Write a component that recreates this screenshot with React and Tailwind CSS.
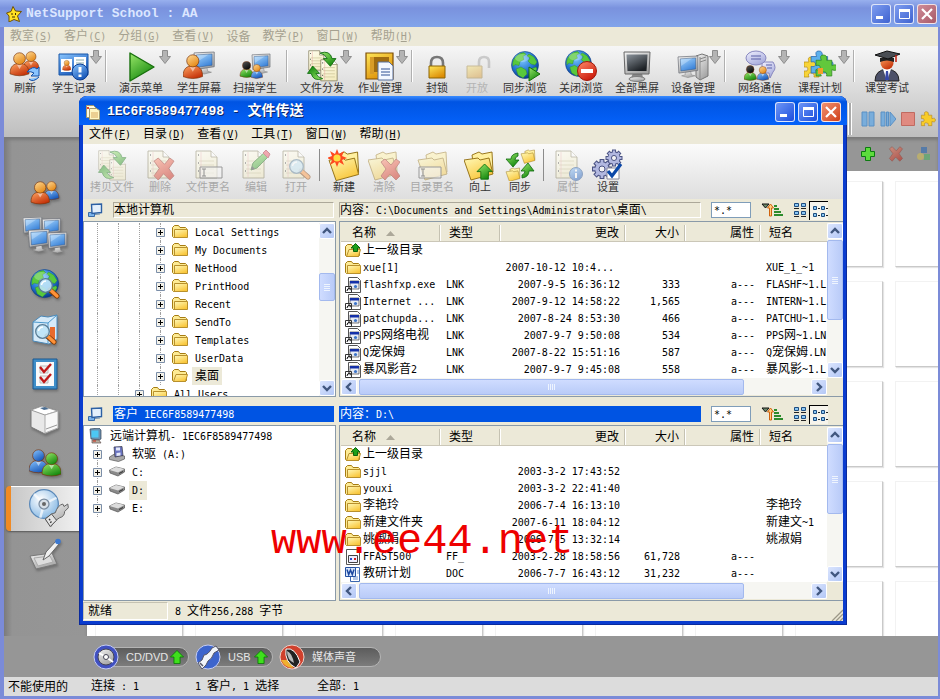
import React from "react";

/* ---------- text ---------- */

const CJK = "font-['DejaVu_Sans_Mono','Noto_Sans_CJK_SC',monospace]";

function T({ children, latin = "text-[10px]" }) {
  return (
    <span className="whitespace-pre">
      {String(children)
        .split(/([\x20-\x7e]+)/)
        .filter(Boolean)
        .map((part, i) =>
          /^[\x20-\x7e]/.test(part) ? (
            <span key={i} className={latin}>
              {part}
            </span>
          ) : (
            part
          )
        )}
    </span>
  );
}

/* ---------- shared drawing parts ---------- */

const stops = {
  orange: ["#ffa865", "#c5330a"],
  skin: ["#ffdb9a", "#e58a18"],
  blue: ["#8ac6ff", "#1656b8"],
  screen: ["#a8d8ff", "#3a82d8"],
  dark: ["#8c949c", "#1c2024"],
  green: ["#9be86a", "#178a10"],
  folder: ["#fff9b8", "#f9c63a"],
  gold: ["#ffe85a", "#dc8c04"],
  red: ["#ff8a6a", "#cc1c0c"],
  page: ["#fffef0", "#f4ecc0"],
  gray: ["#f4f4f4", "#a4a4a4"],
  lilac: ["#f0f0ff", "#a8acdc"],
  hair: ["#555", "#0a0a0a"],
};

function Defs() {
  return (
    <svg width="0" height="0" className="absolute" aria-hidden="true">
      <defs>
        {Object.entries(stops).map(([id, [a, b]]) => (
          <linearGradient key={id} id={id} x1="0" y1="0" x2="0.6" y2="1">
            <stop offset="0" stopColor={a} />
            <stop offset="1" stopColor={b} />
          </linearGradient>
        ))}
        <radialGradient id="sea" cx="0.4" cy="0.3" r="0.75">
          <stop offset="0" stopColor="#7cc8ff" />
          <stop offset="0.6" stopColor="#2272d0" />
          <stop offset="1" stopColor="#083080" />
        </radialGradient>
        <radialGradient id="disc" cx="0.4" cy="0.35" r="0.7">
          <stop offset="0" stopColor="#fff" />
          <stop offset="1" stopColor="#86b8e4" />
        </radialGradient>
      </defs>
    </svg>
  );
}

function Svg({ size = "size-8", box = 32, children }) {
  return (
    <svg className={`${size} shrink-0`} viewBox={`0 0 ${box} ${box}`} aria-hidden="true">
      {children}
    </svg>
  );
}

const at = (x, y, s = 1) => `translate(${x} ${y}) scale(${s})`;

const Person = ({ x, y, s, body = "orange", head = "skin" }) => (
  <g transform={at(x, y, s)} stroke="#7a3208" strokeWidth="0.7">
    <path d="M0 23C0 15 4 12 10 12S20 15 20 23Q10 27 0 23Z" fill={`url(#${body})`} />
    <path d="M7 13l3 5 3-5z" fill="#fff" stroke="none" opacity="0.5" />
    <circle cx="10" cy="7" r="6.2" fill={`url(#${head})`} />
  </g>
);

const Screen = ({ x, y, s, fill = "screen" }) => (
  <g transform={at(x, y, s)}>
    <path d="M8 18l6-1 1 4 4 1-8 2-7-2 4-1z" fill="url(#gray)" stroke="#777" strokeWidth="0.5" />
    <path d="M0 1L22 0v16L1 19z" fill="url(#gray)" stroke="#6c7078" strokeWidth="0.8" />
    <path d="M2.5 3.2L19.6 2.2v12.2L3.2 16.6z" fill={`url(#${fill})`} stroke="#2c5080" strokeWidth="0.5" />
    <path d="M3 3.5L16 2.6 3.4 11z" fill="#fff" opacity="0.28" />
  </g>
);

const Globe = ({ x = 2, y = 1, s = 1 }) => (
  <g transform={at(x, y, s)}>
    <circle cx="14" cy="14" r="13.5" fill="url(#sea)" stroke="#0b3c84" strokeWidth="0.6" />
    <path d="M3 8Q7 2 13 1.5l2 2-3 2 1 3-4 2-1 4-4-1-2 2Q1 11 3 8zM18 3l5 3 3 5-2 3-4-1-3-3 2-3-3-2zM5 18l5-2 5 3 1 4-4 4-5-3zM20 18l5-2 1 2-3 5-4 1z" fill="#58c83c" stroke="#2c8c20" strokeWidth="0.4" />
    <ellipse cx="11" cy="7" rx="7" ry="4" fill="#fff" opacity="0.25" />
  </g>
);

const Page = ({ x, y, s = 1 }) => (
  <g transform={at(x, y, s)}>
    <path d="M1 1h15l6 6v21H1z" fill="url(#page)" stroke="#77704c" strokeWidth="0.9" />
    <path d="M16 1v6h6" fill="#fff" stroke="#77704c" strokeWidth="0.8" />
    <path d="M4 11h15M4 15h15M4 19h15M4 23h15" stroke="#c4bc8c" strokeWidth="0.8" />
    <path d="M6 2v25" stroke="#e8a0a0" strokeWidth="0.6" />
    <path d="M3 5h1M3 13h1M3 21h1" stroke="#333" strokeWidth="1.4" />
  </g>
);

const Folder = ({ x, y, s = 1 }) => (
  <g transform={at(x, y, s)} stroke="#8e6a0c" strokeWidth="0.9" strokeLinejoin="round">
    <path d="M8 5l7-3 3 2 10-2 1 20-18 5z" fill="#fff0a0" />
    <path d="M0 10l14-2 2 2 9-2 4 16-22 6z" fill="url(#folder)" />
  </g>
);

const Lens = ({ x, y, s = 1 }) => (
  <g transform={at(x, y, s)}>
    <path d="M12 12l7 6" stroke="#7c3a08" strokeWidth="5" strokeLinecap="round" />
    <path d="M12.5 12l6.5 6" stroke="#ff9238" strokeWidth="3.4" strokeLinecap="round" />
    <circle cx="7.5" cy="7.5" r="6.8" fill="#bfe4f6" fillOpacity="0.9" stroke="#5a7c94" strokeWidth="1.3" />
    <path d="M3.5 7Q4 3.5 8 3" fill="none" stroke="#fff" strokeWidth="1.5" />
  </g>
);

const UpArrow = ({ x, y, s = 1 }) => (
  <path transform={at(x, y, s)} d="M8 0l8 8h-4v8H4V8H0z" fill="url(#green)" stroke="#0c6a0c" strokeWidth="0.9" />
);

const Cross = ({ x, y, s = 1 }) => (
  <path transform={at(x, y, s)} d="M1 3l4-3 6 6 5-6 4 3-5 7 5 7-4 4-6-6-5 6-4-4 5-7z" fill="url(#red)" stroke="#8c1408" strokeWidth="0.8" />
);

const Curl = ({ x, y, s = 1, r = 0 }) => (
  <path transform={`translate(${x} ${y}) scale(${s}) rotate(${r} 7 7)`} d="M0 1Q9-2 11 6h3.500L9.500 13 3 6h3.500Q5 2 0 1z" fill="url(#green)" stroke="#0c6a0c" strokeWidth="0.8" />
);

const Cursor = ({ x, y }) => (
  <g transform={at(x, y)}>
    <path d="M0 0h22v11H0z" fill="#fff" fillOpacity="0.6" stroke="#333" />
    <path d="M2 2h4M4 2v7M2 9h4" stroke="#222" fill="none" />
  </g>
);

const Puzzle = ({ x, y, s = 1, fill, stroke = "#3a6a20" }) => (
  <path transform={at(x, y, s)} d="M1 5h5Q4 0 8 0t3 5h5v5q5-2 5 2t-5 2v6h-5q1-4-3-4t-2 4H1v-6q4 1 4-2T1 10z" fill={fill} stroke={stroke} strokeWidth="0.7" />
);

const Gear = ({ x, y, r }) => (
  <g transform={at(x, y)} fill="none">
    {[0, 45, 90, 135].map((a) => (
      <path key={a} transform={`rotate(${a})`} d={`M0 ${-r}V${r}`} stroke="#4c5484" strokeWidth={r * 0.48} />
    ))}
    <circle r={r * 0.78} fill="#4c5484" />
    {[0, 45, 90, 135].map((a) => (
      <path key={a} transform={`rotate(${a})`} d={`M0 ${1 - r}V${r - 1}`} stroke="#b2b8e0" strokeWidth={r * 0.26} />
    ))}
    <circle r={r * 0.68} fill="#b2b8e0" />
    <circle r={r * 0.3} fill="#f4f4f4" stroke="#4c5484" />
  </g>
);

/* ---------- large icons ---------- */

const art = {
  refresh: (
    <>
      <Person x={14} y={1} s={0.8} />
      <Person x={1} y={2} s={0.95} />
      <path d="M18 22q6-7 10-3l2-2v9h-8l3-3q-3-2-7-1zM30 27q-6 6-10 2" fill="#8ac4ff" stroke="#1450a8" strokeWidth="1" />
    </>
  ),
  record: (
    <>
      <path d="M1 4h29v21H1z" fill="url(#blue)" stroke="#1856a8" />
      <path d="M3 9h11v13H3zM16 7h12v13H16z" fill="#fff" />
      <Person x={4.5} y={10} s={0.42} />
      <path d="M18 10h8M18 13h8M18 16h6" stroke="#8aa" />
      <circle cx="22" cy="22" r="8" fill="url(#blue)" stroke="#0c3c90" />
      <path d="M22 17v5.5M22 24.5v2.6" stroke="#fff" strokeWidth="3" />
    </>
  ),
  play: <path d="M5 3L29 17 5 31z" fill="url(#green)" stroke="#17700c" strokeWidth="1.4" strokeLinejoin="round" />,
  studentScreen: (
    <>
      <Screen x={11} y={2} s={0.92} />
      <Person x={0} y={4} s={0.98} />
    </>
  ),
  scan: (
    <>
      <Screen x={13} y={4} s={0.82} />
      <Person x={1} y={11} s={0.66} body="green" head="hair" />
      <Person x={12} y={14} s={0.58} body="blue" />
    </>
  ),
  distribute: (
    <>
      <Page x={2} y={0} s={0.72} />
      <Page x={14} y={9} s={0.78} />
      <Curl x={14} y={2} s={1.1} />
      <Curl x={2} y={15} s={1.05} r={180} />
    </>
  ),
  homework: (
    <>
      <path d="M2 3h27v26H2z" fill="url(#gold)" stroke="#7c4c04" strokeWidth="1.2" />
      <path d="M6 7h19v15H6z" fill="#a06c10" />
      <path d="M6 7h4v17H6z" fill="#d89c28" />
      <path d="M14 12h11l4 4v14H14z" fill="#f4f8ff" stroke="#58709c" />
      <path d="M17 19h9M17 22h9M17 25h9" stroke="#7088b8" strokeWidth="1.5" />
    </>
  ),
  lock: (
    <>
      <path d="M10 17v-4q0-6 6-6t6 6v4" fill="none" stroke="#777" strokeWidth="2.600" />
      <path d="M8 16h16v12H8z" fill="url(#gold)" stroke="#8c6404" strokeLinejoin="round" />
    </>
  ),
  unlock: (
    <>
      <path d="M18 16v-4q0-5 5-5t5 5v6" fill="none" stroke="#888" strokeWidth="2.6" />
      <path d="M6 16h15v12H6z" fill="url(#gold)" stroke="#8c6404" />
    </>
  ),
  globePlay: (
    <>
      <Globe />
      <path d="M20 17l11 7-11 7z" fill="url(#green)" stroke="#17700c" />
    </>
  ),
  globeStop: (
    <>
      <Globe x={0} y={0} s={0.96} />
      <circle cx="22" cy="21" r="9.5" fill="url(#red)" stroke="#a01808" />
      <path d="M16 19h12v4H16z" fill="#fff" />
    </>
  ),
  black: (
    <>
      <path d="M12 23h9l1 5H10z" fill="#888" />
      <ellipse cx="16" cy="29" rx="8" ry="2.4" fill="url(#gray)" stroke="#777" />
      <path d="M3 2h26l-1 22H4z" fill="url(#gray)" stroke="#666" />
      <path d="M5.500 4.500h21L25.500 21h-19z" fill="url(#dark)" />
    </>
  ),
  device: (
    <>
      <path d="M19 6l6-2 6 2v20l-8 4-4-3z" fill="url(#gray)" stroke="#777" />
      <path d="M23 9l6-2M23 12l6-2M23 7v22" stroke="#888" fill="none" />
      <Screen x={1} y={6} s={0.9} />
    </>
  ),
  chat: (
    <>
      <path d="M18 12h11q4 6 0 10l-3 6-1-5h-7z" fill="url(#lilac)" stroke="#8888c0" />
      <ellipse cx="12" cy="8" rx="10" ry="7" fill="url(#lilac)" stroke="#8888c0" />
      <path d="M7 6h10M7 9h10M22 15h6M23 18h5" stroke="#5a60a8" strokeWidth="1.2" />
      <Person x={0} y={15} s={0.62} body="green" head="hair" />
      <Person x={13} y={16} s={0.58} body="blue" />
    </>
  ),
  lesson: (
    <>
      <Puzzle x={-1} y={7} s={1} fill="#f8d438" stroke="#b88c10" />
      <Puzzle x={6} y={1} s={1.1} fill="#5cb0ec" stroke="#2868b0" />
      <Puzzle x={11} y={5} s={1.05} fill="#62c83c" stroke="#2c8420" />
      <path d="M14 18h5v6h-5z" fill="#f4a028" />
    </>
  ),
  exam: (
    <>
      <path d="M4 31q0-11 12-12 12 1 12 12z" fill="#4c5068" stroke="#222" />
      <path d="M12 19l4 12 4-12z" fill="#fff" />
      <path d="M15 21h2l1 9h-4z" fill="#3848a8" />
      <circle cx="16" cy="13" r="6.500" fill="url(#orange)" />
      <path d="M9 8h14v4q-7-3-14 0z" fill="#222" />
      <path d="M4 5l12-4 13 3-12 5z" fill="#4a4e54" stroke="#111" />
      <path d="M25 5v7" stroke="#c01c0c" strokeWidth="1.500" />
    </>
  ),
  copy: (
    <>
      <Page x={2} y={1} s={0.7} />
      <Page x={13} y={10} s={0.75} />
      <Curl x={14} y={2} s={1.1} />
      <Curl x={3} y={15} s={1.05} r={180} />
    </>
  ),
  deletePage: (
    <>
      <Page x={3} y={1} />
      <Cross x={9} y={9} s={1.05} />
    </>
  ),
  rename: (
    <>
      <Page x={3} y={1} />
      <Cursor x={8} y={18} />
    </>
  ),
  edit: (
    <>
      <Page x={2} y={1} />
      <path d="M11 21l2-7L25 3l4 4-12 12z" fill="url(#green)" stroke="#186810" />
      <path d="M23 4l3-3 4 4-2 4z" fill="#e84a5a" stroke="#a02030" />
      <path d="M11 21l1-4 3 3z" fill="#333" />
    </>
  ),
  open: (
    <>
      <Page x={2} y={1} />
      <Lens x={9} y={10} />
    </>
  ),
  newFolder: (
    <>
      <Folder x={1} y={1} s={1.02} />
      <path d="M9 0l2 5 5-3-2 5 5 2-5 2 2 5-5-3-2 5-2-5-5 3 2-5-5-2 5-2-2-5 5 3z" fill="#ff4a20" />
      <circle cx="9" cy="9" r="3.600" fill="#ffdc40" />
    </>
  ),
  clear: (
    <>
      <Folder x={0} y={1} />
      <Cross x={12} y={10} />
    </>
  ),
  renameDir: (
    <>
      <Folder x={2} y={1} />
      <Cursor x={3} y={18} />
    </>
  ),
  up: (
    <>
      <Folder x={0} y={1} />
      <UpArrow x={13} y={15} s={0.95} />
    </>
  ),
  sync: (
    <>
      <Folder x={17} y={0} s={0.48} />
      <Folder x={2} y={18} s={0.48} />
      <path d="M14 4Q7 5 7 10H2l7 8 6-7h-4q0-3 3-4z" fill="url(#green)" stroke="#0c6a0c" strokeWidth="0.8" />
      <path d="M18 29q7-1 7-7h5l-6-8-7 8h4q0 3-3 4z" fill="url(#green)" stroke="#0c6a0c" strokeWidth="0.8" />
    </>
  ),
  props: (
    <>
      <Page x={3} y={1} />
      <circle cx="24" cy="25" r="6.500" fill="url(#blue)" stroke="#1c4c90" />
      <path d="M24 20.500v2M24 24v5" stroke="#fff" strokeWidth="2" />
    </>
  ),
  settings: (
    <>
      <Gear x={22} y={9} r={8.5} />
      <Gear x={10} y={20} r={10} />
      <path d="M15 19h12v11H15z" fill="#fff" stroke="#889" />
      <path d="M16 22l4 5 9-12" fill="none" stroke="#0c48a8" strokeWidth="3.200" />
    </>
  ),
  users: (
    <>
      <Person x={15} y={3} s={0.75} body="blue" />
      <Person x={2} y={3} s={0.92} />
    </>
  ),
  monitors: (
    <>
      <Screen x={0} y={0} s={0.62} />
      <Screen x={14} y={1} s={0.6} />
      <Screen x={4} y={9} s={0.68} />
      <Screen x={18} y={11} s={0.63} />
    </>
  ),
  globeSearch: (
    <>
      <Globe x={1} y={1} s={1.04} />
      <Lens x={9} y={10} />
    </>
  ),
  boxSearch: (
    <>
      <path d="M4 9l8-6 7 1 9-2v24l-8 5-16-3z" fill="#d6eaf8" stroke="#4a88b8" />
      <path d="M4 9l15 1 9-8M19 10v20" fill="none" stroke="#4a98cc" />
      <path d="M21 14h5v12h-5z" fill="#e86a2c" />
      <Lens x={6} y={11} />
    </>
  ),
  checks: (
    <>
      <path d="M4 1h24v30H4z" fill="#3f8ec8" stroke="#1c5890" />
      <path d="M7 4h18v24H7z" fill="#fafafa" />
      <path d="M11 8h8v7h-8zM11 18h8v7h-8z" fill="#eee" stroke="#bbb" />
      <path d="M11 9l4 5 7-8M11 19l4 5 7-8" fill="none" stroke="#c01818" strokeWidth="2.400" />
    </>
  ),
  printer: (
    <>
      <path d="M2 7l11-4 16 5v17l-13 6L2 24z" fill="#e8e8e8" stroke="#777" />
      <path d="M2 7l14 5 13-4-16-5z" fill="#fff" stroke="#999" />
      <path d="M16 12v18l13-5V8z" fill="#f8f8f8" stroke="#aaa" />
      <path d="M11 5l5-1 4 2-5 1z" fill="#4a6c90" />
      <path d="M17 26l11-4" stroke="#999" />
    </>
  ),
  buddies: (
    <>
      <Person x={0} y={1} s={0.95} body="blue" head="blue" />
      <Person x={13} y={4} s={0.96} body="green" head="green" />
    </>
  ),
  discUsb: (
    <>
      <circle cx="12" cy="12" r="11.500" fill="url(#disc)" stroke="#5a88b8" />
      <path d="M12 12L4 4M12 12l-3 11M12 12l10-5" stroke="#fff" strokeWidth="2" opacity="0.7" />
      <circle cx="12" cy="12" r="4" fill="#d8e0e8" stroke="#7a8ca0" />
      <circle cx="12" cy="12" r="1.600" fill="#666" />
      <path d="M13 24l5-4 3-1q2-6 6-7l1 2 3-2 0.500 3-3 3q0 4-4 5l-3 2-4 5z" fill="url(#gray)" stroke="#666" strokeWidth="0.800" />
      <path d="M13 24l5-4 4 5-5 5z" fill="#e4e4e4" stroke="#555" strokeWidth="0.800" />
      <path d="M16 24l1 1M18 26l-1 1" stroke="#333" />
    </>
  ),
  tablet: (
    <>
      <path d="M1 18l22-3 5 11-21 5z" fill="url(#gray)" stroke="#777" />
      <path d="M5 20l16-2 3 6-15 4z" fill="#ddd" stroke="#aaa" />
      <path d="M14 22l3-8L27 3l3 3-10 12z" fill="#f0f0f0" stroke="#666" />
      <circle cx="29" cy="3.500" r="2.800" fill="#3b78d0" />
    </>
  ),
};

const Art = ({ name, size }) => <Svg size={size}>{art[name]}</Svg>;

/* ---------- small icons ---------- */

const FolderSm = ({ up, open }) => (
  <Svg size="size-4" box={16}>
    <path d="M0.500 3.500l2-2h4l1.500 2h5.500l1 1v8l-1 1H1.500l-1-1z" fill="#fdeb94" stroke="#a67c12" />
    <path d={open ? "M1.500 13.500L4 6.500h11.500l-2 7z" : "M2.500 5.500h13v8h-13z"} fill="url(#folder)" stroke="#b8902c" />
    {up && <path d="M10.500 0.500L15 5h-2.500v3.500h-4V5H6z" fill="#1da01a" stroke="#0c640c" />}
  </Svg>
);

const LinkSm = () => (
  <Svg size="size-4" box={16}>
    <path d="M3.500 0.500h9l3 3v12h-12z" fill="#fff" stroke="#555" />
    <path d="M5 4h9v8H5z" fill="#e8ecf4" stroke="#444" strokeWidth="0.700" />
    <path d="M5 4h9v2.500H5z" fill="#1430a8" />
    <circle cx="10.500" cy="9.500" r="1.600" fill="#3c74c8" />
    <path d="M0.500 9.500h6v6h-6z" fill="#fff" stroke="#333" />
    <path d="M2 14q0-2.500 2.500-2.500M3 11h2.200v2.200" fill="none" stroke="#000" />
  </Svg>
);

const FfSm = () => (
  <Svg size="size-4" box={16}>
    <path d="M1.500 0.500h10l3 3v12h-13z" fill="#fff" stroke="#555" />
    <path d="M3.500 6.500h9v7h-9z" fill="#eef" stroke="#444" />
    <path d="M5 9h2v2H5z" fill="#2848c8" />
    <path d="M9 9h2v2H9z" fill="#d02020" />
  </Svg>
);

const WordSm = () => (
  <Svg size="size-4" box={16}>
    <path d="M5.500 1.500h9v14h-9z" fill="#fff" stroke="#3c68b0" />
    <path d="M8 11h5M8 13h5M12 5h2M12 7h2" stroke="#6a90cc" />
    <path d="M0.500 1.500h10v9h-10z" fill="#d8e6fa" stroke="#2450a0" />
    <path d="M2 3.500l1.700 5L5.500 4l1.800 4.500L9 3.500" fill="none" stroke="#1c48a0" strokeWidth="1.500" />
  </Svg>
);

const smallIcons = {
  up: <FolderSm up open />,
  folder: <FolderSm />,
  link: <LinkSm />,
  ff: <FfSm />,
  word: <WordSm />,
};

const ComputersSm = () => (
  <Svg size="size-4" box={16}>
    <path d="M1.500 10.500h6v4h-6z" fill="#7cb4ec" stroke="#3a6ca8" />
    <path d="M4.500 2.500l10-0.500v8.500l-9.500 1z" fill="#e4f0fc" stroke="#2c60a4" strokeWidth="1.400" />
    <path d="M8 12.500l5-0.500" stroke="#7090b0" />
  </Svg>
);

const RootSm = () => (
  <Svg size="size-4" box={16}>
    <path d="M2 1l9-1 2 2v9l-2 1-8-1z" fill="#6a90b0" stroke="#345" strokeWidth="0.700" />
    <path d="M3.500 2.500h7v7h-7z" fill="#4cc8f4" />
    <path d="M4 12h7l2 3H4z" fill="#b8b0a0" stroke="#655" strokeWidth="0.700" />
    <path d="M5 13h3" stroke="#d02818" />
  </Svg>
);

const DriveSm = () => (
  <Svg size="size-4" box={16}>
    <path d="M0.500 6L7 3l8.500 2v3L9 12 1 9z" fill="#8a8a8a" stroke="#555" strokeWidth="0.700" />
    <path d="M0.500 6L7 3l8.500 2L9 8.500z" fill="#dcdcdc" />
    <path d="M10 9.500l4-2" stroke="#333" />
  </Svg>
);

const FloppySm = () => (
  <Svg size="size-4" box={16}>
    <path d="M0.500 11l5-3 10 2v3l-6 2.500-9-2z" fill="#aaa" stroke="#555" strokeWidth="0.700" />
    <path d="M5 1l8-0.500 1 9L6 11z" fill="#6a74c0" stroke="#334" strokeWidth="0.700" />
    <path d="M7 1.500h4v3H7zM7.500 7l4-0.500v3l-4 0.500z" fill="#e4e8f8" />
  </Svg>
);

const DocSm = () => (
  <Svg size="size-4" box={16}>
    <path d="M1.500 1.500h7l3 3v9h-10z" fill="#fffbe0" stroke="#a09870" />
    <path d="M4.500 4.500h7l3 2v9h-10z" fill="#fff6c4" stroke="#a09870" />
    <path d="M6 9h7M6 11h7M6 13h7" stroke="#d8a860" />
    <path d="M2 3h2v2H2z" fill="#e04030" />
  </Svg>
);

const Star = () => (
  <Svg size="size-4" box={16}>
    <path d="M7 0.500l2.500 4.500 6 .5-4 4.500 2 5.500-5.500-2-5 2.500V10L0.500 7l4.500-1.500z" fill="#ffe024" stroke="#705000" />
    <path d="M6 7v2M9.500 7v2M6 11h3" stroke="#402c00" />
  </Svg>
);

const DropArrow = () => (
  <svg className="absolute top-0 right-0 h-3.5 w-3" viewBox="0 0 12 14" aria-hidden="true">
    <path d="M3.500 0.500h5v6h3L6 13.500 0.500 6.500h3z" fill="#b4b4b4" stroke="#8e8e8e" />
  </svg>
);

/* ---------- window controls ---------- */

function CaptionButtons({ faded }) {
  const base = "grid size-5 place-items-center rounded-[3px] border border-white/80";
  const blue = faded
    ? "bg-linear-to-br from-[#7f9df0] to-[#3f62d0]"
    : "bg-linear-to-br from-[#6e95f6] to-[#1c4bdc]";
  const red = faded
    ? "bg-linear-to-br from-[#cf8c98] to-[#a85a68]"
    : "bg-linear-to-br from-[#f0906e] to-[#cf3b12]";
  return (
    <div className="flex shrink-0 gap-[3px]">
      <button aria-label="最小化" className={`${base} ${blue}`}>
        <svg viewBox="0 0 16 16" className="size-4"><path d="M3 10h7v3H3z" fill="#fff" /></svg>
      </button>
      <button aria-label="最大化" className={`${base} ${blue}`}>
        <svg viewBox="0 0 16 16" className="size-4"><path d="M3.500 4.500h10v8h-10z" fill="none" stroke="#fff" /><path d="M3 3h11v3H3z" fill="#fff" /></svg>
      </button>
      <button aria-label="关闭" className={`${base} ${red}`}>
        <svg viewBox="0 0 16 16" className="size-4"><path d="M3 3l10 10M13 3L3 13" stroke="#fff" strokeWidth="2.200" /></svg>
      </button>
    </div>
  );
}

function MenuBar({ items, className }) {
  return (
    <nav className={`flex h-[19px] shrink-0 items-center gap-3 bg-[#ece9d8] pl-1.5 text-xs leading-4 ${className}`}>
      {items.map(([label, key]) => (
        <button key={label} className="whitespace-nowrap">
          {label}
          {key && (
            <span className="text-[10px]">
              (<u>{key}</u>)
            </span>
          )}
        </button>
      ))}
    </nav>
  );
}

const arrowPath = {
  up: "M4 10l4-4 4 4",
  down: "M4 6l4 4 4-4",
  left: "M10 4L6 8l4 4",
  right: "M6 4l4 4-4 4",
};

function ScrollButton({ dir }) {
  return (
    <button aria-label={dir} className="size-4 shrink-0 rounded-[2px] border border-white bg-linear-to-br from-[#dbe5fe] to-[#b4c8f6]">
      <svg viewBox="1 1 14 14" className="size-full">
        <path d={arrowPath[dir]} fill="none" stroke="#41577f" strokeWidth="2.400" />
      </svg>
    </button>
  );
}

function VScroll({ before, thumb }) {
  return (
    <div className="flex w-4 shrink-0 flex-col bg-[#f6f6f2]">
      <ScrollButton dir="up" />
      <div className={`shrink-0 ${before}`} />
      <div className={`flex shrink-0 flex-col items-center justify-center gap-px rounded-[2px] border border-[#a3b9ee] bg-linear-to-r from-[#cfdcff] to-[#b9cbf8] ${thumb}`}>
        {[0, 1, 2, 3].map((n) => (
          <i key={n} className="h-px w-1.5 bg-[#eef4fe]" />
        ))}
      </div>
      <div className="flex-1" />
      <ScrollButton dir="down" />
    </div>
  );
}

function HScroll() {
  return (
    <div className="flex h-[17px] bg-[#ece9d8]">
      <div className="flex flex-1 items-center bg-[#f6f6f2]">
        <ScrollButton dir="left" />
        <div className="ml-0.5 flex h-4 w-[385px] items-center justify-center gap-px rounded-[2px] border border-[#a3b9ee] bg-linear-to-b from-[#cfdcff] to-[#b9cbf8]">
          {[0, 1, 2, 3].map((n) => (
            <i key={n} className="h-1.5 w-px bg-[#eef4fe]" />
          ))}
        </div>
        <div className="flex-1" />
        <ScrollButton dir="right" />
      </div>
      <div className="w-4" />
    </div>
  );
}

/* ---------- outer window ---------- */

const mainTools = [
  ["refresh", "刷新", "w-[42px]"],
  ["record", "学生记录", "w-14", true],
  null,
  ["play", "演示菜单", "w-15", true],
  ["studentScreen", "学生屏幕", "w-14"],
  ["scan", "扫描学生", "w-14"],
  null,
  ["distribute", "文件分发", "w-15", true],
  ["homework", "作业管理", "w-14", true],
  null,
  ["lock", "封锁", "w-10"],
  ["unlock", "开放", "w-10", false, true],
  ["globePlay", "同步浏览", "w-14"],
  ["globeStop", "关闭浏览", "w-14"],
  ["black", "全部黑屏", "w-14"],
  ["device", "设备管理", "w-14", true],
  null,
  ["chat", "网络通信", "w-15", true],
  ["lesson", "课程计划", "w-15", true],
  null,
  ["exam", "课堂考试", "w-14"],
];

function MainToolbar() {
  return (
    <div className="flex h-[91px] shrink-0 flex-col justify-between bg-linear-to-b from-[#f6f6f6] to-[#bebebe]">
      <div className="flex pt-1">
        {mainTools.map((tool, i) =>
          tool ? (
            <button
              key={i}
              disabled={tool[4]}
              className={`relative flex shrink-0 flex-col items-center text-[11px] leading-[14px] text-[#333] disabled:text-[#b4b4b4] ${tool[2]}`}
            >
              <span className={tool[4] ? "opacity-35" : ""}>
                <Art name={tool[0]} size="size-8" />
              </span>
              {tool[1]}
              {tool[3] && <DropArrow />}
            </button>
          ) : (
            <i key={i} className="mx-1 h-8 w-px shrink-0 bg-white shadow-[-1px_0_#b0b0b0]" />
          )
        )}
      </div>
      <div className="flex h-9 items-center justify-end gap-1 pr-0.5">
        <i className="mr-1 h-8 w-1 border-x border-x-white bg-[#aaa]" />
        <button aria-label="暂停">
          <Svg size="size-4" box={16}><path d="M2 1h5v14H2zM9 1h5v14H9z" fill="#79addb" stroke="#5a90c4" /></Svg>
        </button>
        <button aria-label="继续">
          <Svg size="size-4" box={16}><path d="M1 1h4v14H1zM6.500 1h2v14h-2zM10 1l6 7-6 7z" fill="#79addb" stroke="#5a90c4" /></Svg>
        </button>
        <button aria-label="停止">
          <Svg size="size-4" box={16}><path d="M1.500 1.500h13v13h-13z" fill="#e08a80" stroke="#c06a60" /></Svg>
        </button>
        <button aria-label="插件">
          <Svg size="size-4" box={24}><Puzzle x={1} y={1} s={1.05} fill="#f8cc28" stroke="#a87808" /></Svg>
        </button>
      </div>
    </div>
  );
}

const sideItems = [
  ["users", "size-8"],
  ["monitors", "size-11"],
  ["globeSearch", "size-8"],
  ["boxSearch", "size-8"],
  ["checks", "size-8"],
  ["printer", "size-8"],
  ["buddies", "size-8"],
  ["discUsb", "size-10"],
  ["tablet", "size-8"],
];

function Sidebar() {
  return (
    <aside className="w-[83px] shrink-0 bg-linear-to-r from-[#7c7c7c] via-[#949494] via-10% to-[#969696] pt-[34px] shadow-[inset_0_3px_3px_#7a7a7a]">
      {sideItems.map(([name, size]) => (
        <button
          key={name}
          aria-label={name}
          className={
            name === "discUsb"
              ? "ml-0.5 flex h-[45px] w-20 items-center justify-center rounded-l-sm border-l-[5px] border-[#f08a24] bg-linear-to-r from-[#c8c8c8] to-[#f4f4f4] shadow-[0_1px_2px_#555,inset_0_1px_#fff]"
              : "flex h-[45px] w-[82px] items-center justify-center drop-shadow-[1px_2px_1px_#5558]"
          }
        >
          <Art name={name} size={size} />
        </button>
      ))}
    </aside>
  );
}

function Canvas() {
  return (
    <div className="grid min-h-0 flex-1 auto-rows-[86px] grid-cols-[repeat(9,88px)] content-start gap-x-3 gap-y-3.5 overflow-hidden bg-white pt-2.5 pl-2">
      {Array.from({ length: 45 }, (_, i) => (
        <div key={i} className="border border-[#f2f2f2] border-r-[#c9c9c9] border-b-[#c9c9c9] bg-white shadow-[1px_1px_1px_#e4e4e4]" />
      ))}
    </div>
  );
}

function MediaPill({ label, width, icon, arrow }) {
  return (
    <button className="relative flex h-[26px] items-center">
      <span className="z-10 grid size-[26px] place-items-center rounded-full">{icon}</span>
      <span
        className={`-ml-3 flex h-5 items-center justify-between rounded-r-full border border-[#b4b4b4] bg-linear-to-b from-[#5c5c5c] to-[#7c7c7c] pr-1 pl-[18px] font-['Liberation_Sans','Noto_Sans_CJK_SC',sans-serif] text-[11px] leading-4 text-[#e6e6e6] ${width}`}
      >
        {label}
        {arrow && (
          <Svg size="size-3.5" box={16}>
            <path d="M8 0.500l7.500 7.500h-4v7.500h-7V8h-4z" fill="#3fe01c" stroke="#0c7a08" />
          </Svg>
        )}
      </span>
    </button>
  );
}

function MediaBar() {
  return (
    <div className="flex h-[41px] shrink-0 items-center gap-1.5 bg-[#969696] pl-[89px]">
      <MediaPill
        label="CD/DVD"
        width="w-[82px]"
        arrow
        icon={
          <Svg size="size-[26px]" box={26}>
            <circle cx="13" cy="13" r="12" fill="#4050c0" stroke="#c4ccf4" />
            <circle cx="13" cy="13" r="8" fill="url(#gray)" stroke="#445" />
            <path d="M13 13L6 9M13 13l7 5" stroke="#fff" strokeWidth="2" />
            <circle cx="13" cy="13" r="2.500" fill="#fff" stroke="#445" />
          </Svg>
        }
      />
      <MediaPill
        label="USB"
        width="w-[64px]"
        arrow
        icon={
          <Svg size="size-[26px]" box={26}>
            <circle cx="13" cy="13" r="12" fill="#3c64cc" stroke="#c4ccf4" />
            <path d="M3 19l4-3 2-5q4 0 8-7l4-2 3 4-5 3q-2 6-6 8l-2 4-4 4z" fill="#f0f4fa" stroke="#556" />
            <path d="M5 19l3 3" stroke="#556" strokeWidth="1.500" />
          </Svg>
        }
      />
      <MediaPill
        label="媒体声音"
        width="w-[88px]"
        icon={
          <Svg size="size-[26px]" box={26}>
            <circle cx="13" cy="13" r="12" fill="#d0402c" stroke="#ecd0c8" />
            <path d="M2 16q4 8 12 8l-2-8z" fill="#f0b030" />
            <path d="M7 5q9-2 14 13l-4 6Q5 18 7 5z" fill="#222" stroke="#fff" />
            <path d="M8 7q5 2 7 12-7-3-7-12z" fill="#bbb" />
          </Svg>
        }
      />
    </div>
  );
}

/* ---------- file transfer window ---------- */

const fileTools = [
  ["copy", "拷贝文件", "w-14", true],
  ["deletePage", "删除", "w-10", true],
  ["rename", "文件更名", "w-14", true],
  ["edit", "编辑", "w-10", true],
  ["open", "打开", "w-10", true],
  null,
  ["newFolder", "新建", "w-10"],
  ["clear", "清除", "w-10", true],
  ["renameDir", "目录更名", "w-14", true],
  ["up", "向上", "w-10"],
  ["sync", "同步", "w-10"],
  null,
  ["props", "属性", "w-10", true],
  ["settings", "设置", "w-10"],
];

function FileToolbar() {
  return (
    <div className="flex h-[55px] shrink-0 bg-linear-to-b from-[#fbfbfb] to-[#dedede] pt-[5px] pl-px">
      {fileTools.map((tool, i) =>
        tool ? (
          <button
            key={i}
            disabled={tool[3]}
            className={`flex flex-col items-center text-[11px] leading-[14px] text-[#333] disabled:text-[#a8a8a8] ${tool[2]}`}
          >
            <span className={tool[3] ? "opacity-45" : ""}>
              <Art name={tool[0]} size="size-8" />
            </span>
            {tool[1]}
          </button>
        ) : (
          <i key={i} className="mr-1 ml-[3px] h-8 w-px bg-[#8c8c8c]" />
        )
      )}
    </div>
  );
}

function Expander() {
  return (
    <svg viewBox="0 0 9 9" className="z-10 size-[9px] shrink-0" aria-hidden="true">
      <path d="M0.500 0.500h8v8h-8z" fill="#f4f2ea" stroke="#7b8ea8" />
      <path d="M2 4.500h5M4.500 2v5" stroke="#000" />
    </svg>
  );
}

function TreeRow({ guides = 0, icon, label, selected }) {
  return (
    <li className="flex h-[18px] shrink-0 items-center">
      {Array.from({ length: guides }, (_, i) => (
        <i key={i} className="flex h-full w-[21px] shrink-0 justify-center">
          <b className="h-full w-px border-l border-dotted border-[#a0a0a0]" />
        </i>
      ))}
      <span className="grid h-full w-[21px] shrink-0 place-items-center">
        <b className="col-start-1 row-start-1 h-full w-px border-l border-dotted border-[#a0a0a0]" />
        <span className="col-start-1 row-start-1 grid place-items-center">
          <Expander />
        </span>
      </span>
      <span className="mr-1 ml-px shrink-0">{icon}</span>
      <span className={`px-[3px] leading-[18px] ${selected ? "bg-[#ece9d8]" : ""}`}>
        <T>{label}</T>
      </span>
    </li>
  );
}

const localFolders = ["Local Settings", "My Documents", "NetHood", "PrintHood", "Recent", "SendTo", "Templates", "UserData"];

function LocalTree() {
  return (
    <div className="flex min-h-0 flex-1">
      <ul className="min-w-0 flex-1 overflow-hidden pl-[3px]">
        {localFolders.map((name) => (
          <TreeRow key={name} guides={3} icon={<FolderSm />} label={name} />
        ))}
        <TreeRow guides={3} icon={<FolderSm open />} label="桌面" selected />
        <TreeRow guides={2} icon={<FolderSm />} label="All Users" />
      </ul>
      <VScroll before="h-[34px]" thumb="h-7" />
    </div>
  );
}

function RemoteTree() {
  return (
    <ul className="flex-1 overflow-hidden pl-[3px]">
      <li className="flex h-[18px] items-center pl-px">
        <RootSm />
        <span className="pl-1.5 leading-[18px]">
          <T>远端计算机- 1EC6F8589477498</T>
        </span>
      </li>
      <TreeRow icon={<FloppySm />} label="软驱 (A:)" />
      <TreeRow icon={<DriveSm />} label="C:" />
      <TreeRow icon={<DriveSm />} label="D:" selected />
      <TreeRow icon={<DriveSm />} label="E:" />
    </ul>
  );
}

const columns = [
  ["名称", "w-[99px]", "pl-[11px] text-left"],
  ["类型", "w-15", "pl-[9px] text-left"],
  ["更改", "w-[125px]", "pr-[5px] text-right"],
  ["大小", "w-15", "pr-[5px] text-right"],
  ["属性", "w-[75px]", "pr-[5px] text-right"],
  ["短名", "w-auto", "pl-[9px] text-left"],
];

const localFiles = [
  ["up", "上一级目录"],
  ["folder", "xue[1]", "", "2007-10-12 10:4... ", "", "", "XUE_1_~1"],
  ["link", "flashfxp.exe", "LNK", "2007-9-5 16:36:12", "333", "a---", "FLASHF~1.L"],
  ["link", "Internet ...", "LNK", "2007-9-12 14:58:22", "1,565", "a---", "INTERN~1.L"],
  ["link", "patchupda...", "LNK", "2007-8-24 8:53:30", "466", "a---", "PATCHU~1.L"],
  ["link", "PPS网络电视", "LNK", "2007-9-7 9:50:08", "534", "a---", "PPS网~1.LN"],
  ["link", "Q宠保姆", "LNK", "2007-8-22 15:51:16", "587", "a---", "Q宠保姆.LN"],
  ["link", "暴风影音2", "LNK", "2007-9-7 9:45:08", "558", "a---", "暴风影~1.L"],
];

const remoteFiles = [
  ["up", "上一级目录"],
  ["folder", "sjjl", "", "2003-3-2 17:43:52"],
  ["folder", "youxi", "", "2003-3-2 22:41:40"],
  ["folder", "李艳玲", "", "2006-7-4 16:13:10", "", "", "李艳玲"],
  ["folder", "新建文件夹", "", "2007-6-11 18:04:12", "", "", "新建文~1"],
  ["folder", "姚淑娟", "", "2006-7-5 13:32:14", "", "", "姚淑娟"],
  ["ff", "FFAST500", "FF_", "2003-2-28 18:58:56", "61,728", "a---", ""],
  ["word", "教研计划", "DOC", "2006-7-7 16:43:12", "31,232", "a---", ""],
];

function FileTable({ files, thumb }) {
  return (
    <div className="flex h-full flex-col border-y border-l border-[#8a9aa8] bg-[#ece9d8] pt-px pl-px">
      <div className="flex">
        <div className="min-w-0 flex-1 overflow-hidden bg-white">
          <table className="w-full table-fixed border-collapse">
            <thead>
              <tr className="h-[19px] bg-[#ece9d8] shadow-[inset_0_-1px_#cbc7b8]">
                {columns.map(([name, width, pad], i) => (
                  <th key={name} className={`p-0 font-normal ${width}`}>
                    <div className={`leading-4 ${pad} ${i < 5 ? "border-r border-[#c5c2b2] shadow-[1px_0_#fff]" : ""}`}>
                      {name}
                      {i === 0 && (
                        <svg viewBox="0 0 9 5" className="ml-2.5 inline h-[5px] w-[9px]" aria-hidden="true">
                          <path d="M0 5L4.500 0 9 5z" fill="#aca899" />
                        </svg>
                      )}
                    </div>
                  </th>
                ))}
              </tr>
            </thead>
            <tbody>
              {files.map(([icon, name, type = "", date = "", size = "", attr = "", short = ""]) => (
                <tr key={name} className="h-[17px] leading-[17px]">
                  <td className="p-0">
                    <div className="flex h-[17px] items-center gap-0.5 pl-1 whitespace-nowrap">
                      {smallIcons[icon]}
                      <T>{name}</T>
                    </div>
                  </td>
                  <td className="p-0 pl-1.5"><T>{type}</T></td>
                  <td className="p-0 pr-[5px] text-right"><T>{date}</T></td>
                  <td className="p-0 pr-[5px] text-right"><T>{size}</T></td>
                  <td className="p-0 pr-[5px] text-right"><T>{attr}</T></td>
                  <td className="overflow-hidden p-0 pl-1.5"><T>{short}</T></td>
                </tr>
              ))}
            </tbody>
          </table>
        </div>
        <VScroll before="h-px" thumb={thumb} />
      </div>
      <HScroll />
    </div>
  );
}

function Section({ title, content, active, tree, files, thumb, id }) {
  const field = active
    ? "bg-[#0054e3] text-white border-[#0054e3]"
    : "bg-[#ece9d8] border-[#aca899] border-r-white border-b-white";
  return (
    <section className="flex gap-[3px]">
      <div className="flex w-[253px] shrink-0 flex-col">
        <div className="flex h-[22px] items-center pr-0.5 pl-1">
          <ComputersSm />
          <div className={`ml-2.5 h-4 flex-1 border leading-[14px] ${field}`}>
            <T>{title}</T>
          </div>
        </div>
        <div className="flex h-[176px] flex-col border border-[#8a9aa8] bg-white pt-px">{tree}</div>
      </div>
      <div className="min-w-0 flex-1">
        <div className="flex h-[22px] items-center">
          <div className={`h-4 min-w-0 flex-1 border leading-[14px] ${field}`}>
            <T>{content}</T>
          </div>
          <label className="sr-only" htmlFor={id}>筛选</label>
          <input id={id} defaultValue="*.*" className="mx-2.5 h-4 w-10 border border-[#7f9db9] bg-white px-0.5 text-[10px] leading-[14px]" />
          <button aria-label="排序">
            <svg viewBox="0 0 22 14" className="h-3.5 w-[22px]">
              <path d="M1 1h7L4.500 5z" fill="#6a8a6a" stroke="#111" />
              <path d="M8.500 13V5h-2L9.500 1l3 4h-2v8z" fill="#ffd080" stroke="#d0620c" />
              <path d="M13 3h3M13 6h5M13 9h7M13 12h9" stroke="#2c8c2c" strokeWidth="2" />
            </svg>
          </button>
          <button aria-label="大图标" className="ml-2.5">
            <svg viewBox="0 0 14 16" className="h-4 w-3.5">
              <path d="M1.500 1.500h4v3h-4zM8.500 1.500h4v3h-4zM1.500 9.500h4v3h-4zM8.500 9.500h4v3h-4z" fill="#8cc8f4" stroke="#1c4c80" />
              <path d="M1 6.500h5M8 6.500h5M1 14.500h5M8 14.500h5" stroke="#222" />
            </svg>
          </button>
          <button aria-label="详细资料" className="mr-[15px] ml-0.5 h-[19px] border-t border-l border-black bg-[#f6f4ec]">
            <svg viewBox="0 0 18 17" className="h-[17px] w-[18px]">
              <path d="M3.500 4.500h3v3h-3zM11.500 4.500h3v3h-3zM3.500 11.500h3v3h-3zM11.500 11.500h3v3h-3z" fill="#8cc8f4" stroke="#1c4c80" />
              <path d="M8 6.500h2M16 6.500h2M8 13.500h2M16 13.500h2" stroke="#222" />
            </svg>
          </button>
        </div>
        <div className="h-[176px]">
          <FileTable files={files} thumb={thumb} />
        </div>
      </div>
    </section>
  );
}

function TransferWindow() {
  return (
    <div className="absolute top-24 left-[79px] flex w-[768px] flex-col overflow-hidden rounded-t-lg bg-[#0a3ccf] pb-1 shadow-[inset_0_0_0_1px_#0a2a9c]">
      <div className="flex h-[29px] items-center gap-1.5 bg-linear-to-b from-[#3a8cff] via-[#0054e3] via-20% to-[#0562fa] px-1.5 pt-0.5 text-white">
        <DocSm />
        <h2 className="flex-1 font-['Liberation_Mono','Noto_Sans_CJK_SC',monospace] text-sm leading-5 font-bold [text-shadow:1px_1px_#0a246a]">
          <T latin="text-[13px]">1EC6F8589477498 - 文件传送</T>
        </h2>
        <CaptionButtons />
      </div>
      <div className="mx-1 flex flex-col bg-[#ece9d8]">
        <MenuBar
          className="text-black"
          items={[["文件", "F"], ["目录", "D"], ["查看", "V"], ["工具", "T"], ["窗口", "W"], ["帮助", "H"]]}
        />
        <FileToolbar />
        <div className="flex flex-col gap-1.5">
          <Section
            id="filter-local"
            title="本地计算机"
            content="内容：C:\Documents and Settings\Administrator\桌面\"
            tree={<LocalTree />}
            files={localFiles}
            thumb="h-20"
          />
          <Section
            id="filter-remote"
            active
            title="客户 1EC6F8589477498"
            content="内容：D:\"
            tree={<RemoteTree />}
            files={remoteFiles}
            thumb="h-[70px]"
          />
        </div>
        <footer className="flex h-5 items-center leading-4">
          <span className="h-[18px] w-[85px] border border-[#c5c2b2] border-r-white border-b-white pl-1">就绪</span>
          <span className="flex-1 pl-[7px]">
            <T>8 文件256,288 字节</T>
          </span>
          <svg viewBox="0 0 12 12" className="size-3 self-end" aria-hidden="true">
            <path d="M1 12L12 1M5 12l7-7M9 12l3-3" stroke="#9c9888" strokeWidth="1.300" />
          </svg>
        </footer>
      </div>
    </div>
  );
}

/* ---------- page ---------- */

export default function App() {
  return (
    <div className={`relative flex h-screen flex-col overflow-hidden bg-[#7b8bd8] text-xs text-black ${CJK}`}>
      <Defs />
      <header className="flex h-[27px] shrink-0 items-center gap-1 bg-linear-to-b from-[#98b0ee] via-[#7a92de] via-30% to-[#82a4ea] pr-[3px] pl-1.5">
        <Star />
        <h1 className="flex-1 font-['Liberation_Mono',monospace] text-[13px] leading-5 font-bold text-[#dbe6ff]">
          NetSupport School : AA
        </h1>
        <CaptionButtons faded />
      </header>
      <div className="mr-0.5 mb-[3px] ml-1 flex min-h-0 flex-1 flex-col">
        <MenuBar
          className="text-[#a5a190]"
          items={[["教室", "S"], ["客户", "C"], ["分组", "G"], ["查看", "V"], ["设备"], ["教学", "P"], ["窗口", "W"], ["帮助", "H"]]}
        />
        <MainToolbar />
        <div className="flex min-h-0 flex-1 bg-[#969696]">
          <Sidebar />
          <main className="flex min-w-0 flex-1 flex-col">
            <div className="flex h-[34px] shrink-0 items-center justify-end gap-3 pr-1.5 shadow-[inset_0_3px_3px_#7a7a7a]">
              <button aria-label="添加">
                <Svg size="size-4" box={16}><path d="M5.500 1.500h5v4h4v5h-4v4h-5v-4h-4v-5h4z" fill="#5cdc3c" stroke="#0c7a10" /></Svg>
              </button>
              <button aria-label="移除" className="opacity-50">
                <Svg size="size-4" box={22}><Cross x={1} y={1} s={0.95} /></Svg>
              </button>
              <button aria-label="分组" className="opacity-70">
                <Svg size="size-4" box={16}>
                  <path d="M5 1h6v6H5z" fill="#3c70b0" />
                  <circle cx="4.500" cy="10.500" r="3.500" fill="#c8b860" />
                  <path d="M8 8h6v6H8z" fill="#5cac6c" />
                </Svg>
              </button>
            </div>
            <Canvas />
          </main>
        </div>
        <MediaBar />
        <footer className="flex h-[19px] shrink-0 items-center bg-[#dcdcdc] pl-1 leading-4">
          <span className="w-[83px]">不能使用的</span>
          <span className="w-[104px]"><T>连接 : 1</T></span>
          <span className="w-[122px]"><T>1 客户, 1 选择</T></span>
          <span><T>全部: 1</T></span>
        </footer>
      </div>
      <TransferWindow />
      <p className="pointer-events-none absolute top-[518px] left-[271px] font-['Liberation_Mono',monospace] text-[42px] leading-[48px] text-[#ee0000]">
        www.ee44.net
      </p>
    </div>
  );
}
